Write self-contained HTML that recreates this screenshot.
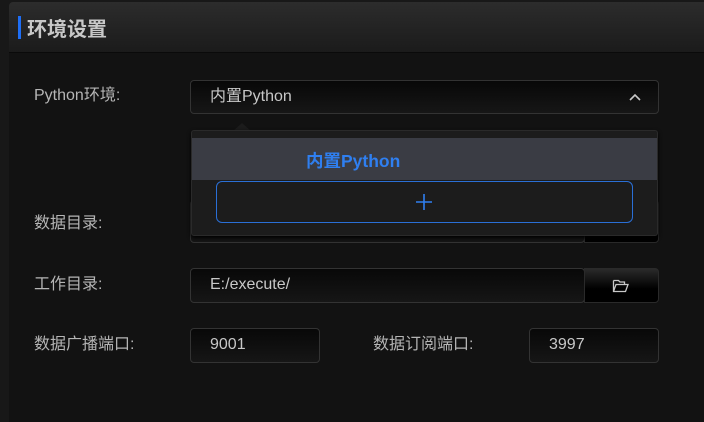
<!DOCTYPE html>
<html><head><meta charset="utf-8"><style>
*{margin:0;padding:0;box-sizing:border-box}
body{width:704px;height:416px;background:#181818;position:relative;overflow:hidden;font-family:"Liberation Sans","Noto Sans CJK SC",sans-serif;color:#bdbdbd}
.panel{position:absolute;left:9px;top:2px;width:700px;height:420px;background:#121212;border-radius:4px 0 0 0}
.hdr{position:absolute;left:9px;top:2px;width:700px;height:51px;background:linear-gradient(#2c2c2c,#1b1b1b);border-bottom:1px solid #0a0a0a;border-radius:4px 0 0 0}
.bar{position:absolute;left:18px;top:16px;width:3px;height:23px;background:#1e6ef5}
.title{position:absolute;left:27px;top:13px;font-size:20px;font-weight:bold;color:#c8c8c8}
.lbl{position:absolute;font-size:16px;color:#b5b5b5}
.inp{position:absolute;background:linear-gradient(#080808,#161616);border:1px solid #333;border-radius:4px;font-size:16px;color:#c8c8c8;padding-left:19px;line-height:32px}
.btn{position:absolute;background:linear-gradient(#2a2a2a,#000 60%);border:1px solid #2a2a2a;border-radius:0 4px 4px 0}
</style></head><body>
<div class="panel"></div>
<div class="hdr"></div>
<div class="bar"></div>
<div class="title">环境设置</div>

<div class="lbl" style="left:34px;top:81px">Python环境:</div>
<div class="inp" style="left:190px;top:80px;width:469px;height:34px">内置Python</div>
<svg style="position:absolute;left:628px;top:92px" width="14" height="10"><path d="M2 8 L7 3 L12 8" stroke="#c8c8c8" stroke-width="1.6" fill="none"/></svg>

<div class="lbl" style="left:34px;top:209px">数据目录:</div>
<div class="inp" style="left:190px;top:200px;width:395px;height:43px"></div>
<div class="btn" style="left:584px;top:200px;width:75px;height:43px"></div>

<svg style="position:absolute;left:232px;top:122px" width="20" height="10"><path d="M0 10 L10 1 L20 10 Z" fill="#1c1c1c"/></svg>
<div style="position:absolute;left:191px;top:130px;width:467px;height:106px;background:#1c1c1c;border:1px solid #2a2a2a;border-radius:3px;box-shadow:0 2px 4px #000"></div>
<div style="position:absolute;left:192px;top:138px;width:465px;height:42px;background:#3a3c44"></div>
<div style="position:absolute;left:306px;top:148px;font-size:17.5px;font-weight:bold;color:#2f7ff0">内置Python</div>
<div style="position:absolute;left:216px;top:181px;width:417px;height:42px;border:1.5px solid #2a6fd6;border-radius:6px"></div>
<svg style="position:absolute;left:415px;top:193px" width="18" height="18"><path d="M9 1V17M1 9H17" stroke="#2f7ff0" stroke-width="1.6"/></svg>

<div class="lbl" style="left:34px;top:270px">工作目录:</div>
<div class="inp" style="left:190px;top:268px;width:395px;height:35px">E:/execute/</div>
<div class="btn" style="left:584px;top:268px;width:75px;height:35px"></div>
<svg style="position:absolute;left:612px;top:278px" width="18" height="15"><path d="M1.5 2.5H6.5L8 4H12.5V6.5M1.5 2.5V13.5H13.5L16 6.5H4L1.5 13.5" stroke="#c8c8c8" stroke-width="1.3" fill="none"/></svg>

<div class="lbl" style="left:34px;top:330px">数据广播端口:</div>
<div class="inp" style="left:190px;top:328px;width:130px;height:35px">9001</div>
<div class="lbl" style="left:373px;top:330px">数据订阅端口:</div>
<div class="inp" style="left:529px;top:328px;width:130px;height:35px">3997</div>
</body></html>
